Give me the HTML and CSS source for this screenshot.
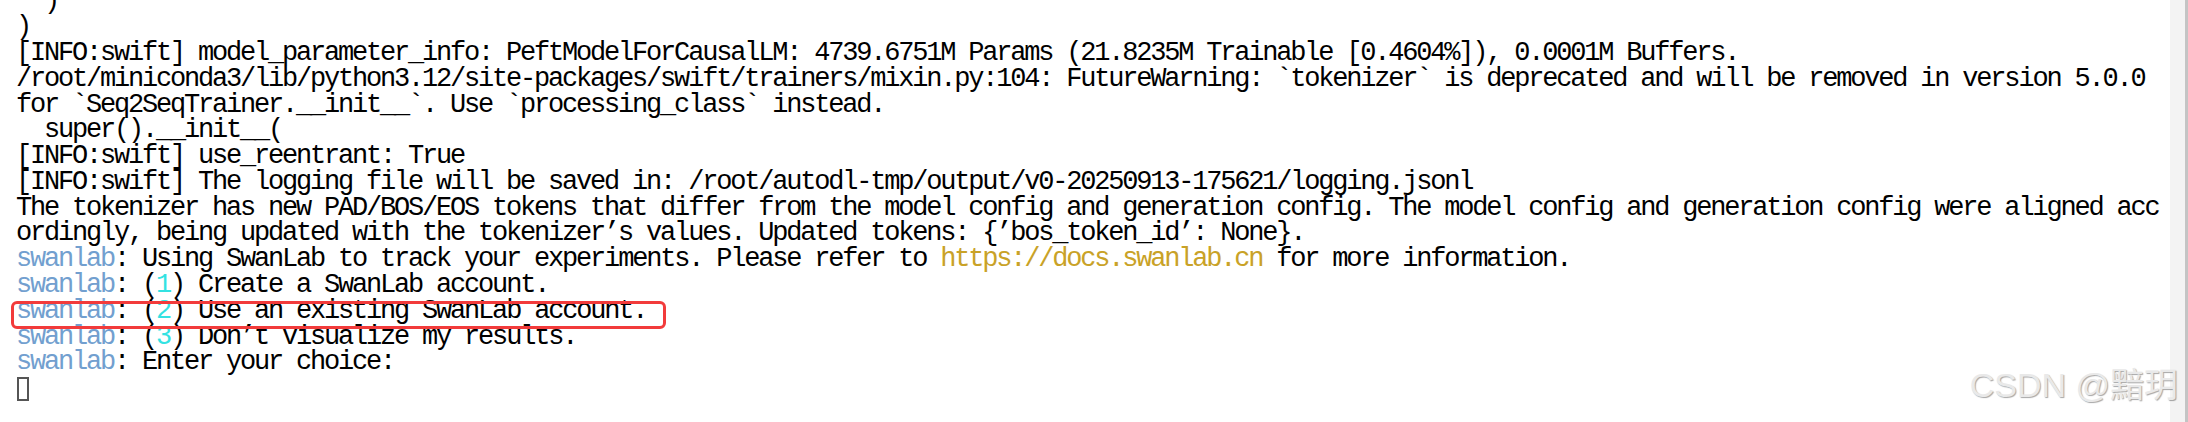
FILE: index.html
```html
<!DOCTYPE html>
<html lang="en">
<head>
<meta charset="utf-8">
<title>Terminal output</title>
<link rel="stylesheet" href="styles.css">
</head>
<body>
<div class="page">
  <main class="term">
    <div class="line">  )</div>
    <div class="line">)</div>
    <div class="line">[INFO:swift] model_parameter_info: PeftModelForCausalLM: 4739.6751M Params (21.8235M Trainable [0.4604%]), 0.0001M Buffers.</div>
    <div class="line">/root/miniconda3/lib/python3.12/site-packages/swift/trainers/mixin.py:104: FutureWarning: `tokenizer` is deprecated and will be removed in version 5.0.0</div>
    <div class="line">for `Seq2SeqTrainer.__init__`. Use `processing_class` instead.</div>
    <div class="line">  super().__init__(</div>
    <div class="line">[INFO:swift] use_reentrant: True</div>
    <div class="line">[INFO:swift] The logging file will be saved in: /root/autodl-tmp/output/v0-20250913-175621/logging.jsonl</div>
    <div class="line">The tokenizer has new PAD/BOS/EOS tokens that differ from the model config and generation config. The model config and generation config were aligned acc</div>
    <div class="line">ordingly, being updated with the tokenizer’s values. Updated tokens: {’bos_token_id’: None}.</div>
    <div class="line"><span class="sl">swanlab</span>: Using SwanLab to track your experiments. Please refer to <span class="url">https://docs.swanlab.cn</span> for more information.</div>
    <div class="line"><span class="sl">swanlab</span>: (<span class="num">1</span>) Create a SwanLab account.</div>
    <div class="line line-hl"><span class="sl">swanlab</span>: (<span class="num">2</span>) Use an existing SwanLab account.<span class="mark" aria-hidden="true"></span></div>
    <div class="line"><span class="sl">swanlab</span>: (<span class="num">3</span>) Don’t visualize my results.</div>
    <div class="line"><span class="sl">swanlab</span>: Enter your choice:</div>
    <div class="line"><span class="cursor"></span></div>
  </main>
  <aside class="scrollbar"><div class="thumb"></div></aside>
  <div class="watermark">CSDN @黯玥</div>
</div>
</body>
</html>
```

FILE: styles.css
```css
html, body {
  margin: 0;
  padding: 0;
  background: #ffffff;
}

.page {
  position: relative;
  display: flex;
  height: 422px;
  overflow: hidden;
}

.term {
  flex: 1;
  margin-top: -10.7px;
  padding-left: 16px;
  font-family: "Liberation Mono", "DejaVu Sans Mono", monospace;
  font-size: 27px;
  line-height: 25.8px;
  letter-spacing: -2.2px;
  color: #000000;
}

.line {
  height: 25.8px;
  white-space: pre;
}

.line-hl {
  position: relative;
}

.sl {
  color: #729fcf;
}

.num {
  color: #34e2e2;
}

.url {
  color: #c9a227;
}

.mark {
  position: absolute;
  left: -5px;
  top: 2px;
  width: 655px;
  height: 28px;
  box-sizing: border-box;
  border: 3px solid #f23b3b;
  border-radius: 6px;
}

.cursor {
  display: inline-block;
  vertical-align: top;
  width: 12px;
  height: 24px;
  margin-top: 1px;
  margin-left: 1px;
  box-sizing: border-box;
  border: 2px solid #555555;
}

.scrollbar {
  width: 18px;
  background: #f3f3f3;
  display: flex;
  justify-content: flex-end;
}

.thumb {
  width: 3px;
  background: #c4c4c4;
}

.watermark {
  position: absolute;
  right: 10px;
  top: 358px;
  font-family: "Liberation Sans Narrow", "Liberation Sans", "Noto Sans CJK SC", sans-serif;
  font-size: 34px;
  color: #e9e9e9;
  text-shadow: 1px 1px 1px rgba(0, 0, 0, 0.35);
  white-space: nowrap;
}
```
